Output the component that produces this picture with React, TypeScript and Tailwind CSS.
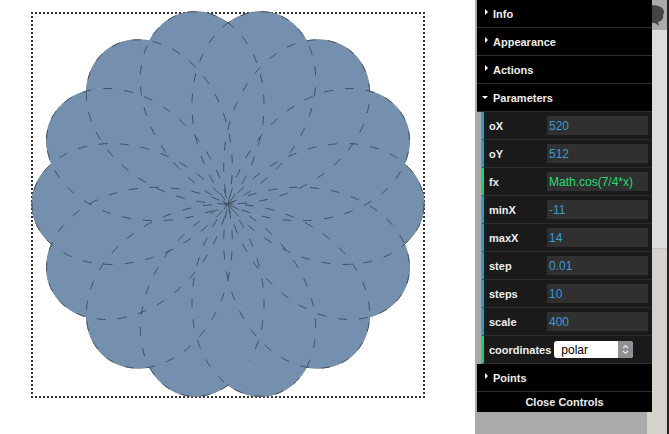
import React, { useMemo } from 'react';

const NUM_ROWS = [
  { label: 'oX', value: '520' },
  { label: 'oY', value: '512' },
  { label: 'fx', value: 'Math.cos(7/4*x)', fn: true },
  { label: 'minX', value: '-11' },
  { label: 'maxX', value: '14' },
  { label: 'step', value: '0.01' },
  { label: 'steps', value: '10' },
  { label: 'scale', value: '400' },
];

const Folder = ({ title, open }: { title: string; open?: boolean }) => (
  <div className="relative flex h-7 items-center border-b border-[#2c2c2c] bg-black pl-[16px] pt-px text-[11px] font-bold text-[#eee]">
    {title}
    <span
      className={
        open
          ? 'absolute left-[5px] top-[12px] h-0 w-0 border-x-[3px] border-t-[3px] border-x-transparent border-t-white'
          : 'absolute left-[8px] top-[9px] h-0 w-0 border-y-[3px] border-l-[3px] border-y-transparent border-l-white'
      }
    />
  </div>
);

export default function App() {
  const d = useMemo(() => {
    const pts: string[] = [];
    for (let x = -11; x <= 14.0001; x += 0.01) {
      const r = 196 * Math.cos((7 / 4) * x);
      pts.push(`${(195 + r * Math.cos(x)).toFixed(2)} ${(190 + r * Math.sin(x)).toFixed(2)}`);
    }
    return 'M' + pts.join('L');
  }, []);

  return (
    <div className="flex h-[434px] w-[669px] overflow-hidden bg-white font-['Liberation_Sans',Arial,sans-serif]">
      <div className="w-[475px] shrink-0 pl-[31px] pt-[12px]">
        <div className="h-[386px] w-[394px] border-2 border-dotted border-[#333]">
          <svg width="390" height="382" viewBox="0 0 390 382" className="block overflow-visible">
            {/* solid line under the fill: only its outer half shows, as the thin edge */}
            <path d={d} fill="none" stroke="#6a7888" strokeWidth="1" />
            <path d={d} fill="#7590ae" stroke="#434f5f" strokeWidth="1" strokeDasharray="9 12" />
          </svg>
        </div>
      </div>

      <div className="flex w-[194px] shrink-0">
        <div className="relative flex w-[192px] flex-col bg-[#d4d2cb]">
          <div className="flex h-[30px] shrink-0 items-start bg-[#aaaaaa] pl-[177px]">
            <svg width="13" height="24" viewBox="0 0 13 24" className="mt-[4px] block" fill="#444444">
              <path d="M0 1c7 0 12 3 12 7s-5 6-12 6z" />
              <path d="M0 12c5 1 9 0 11-1 1 3-1 6-5 7l1 4-4-3-3 0z" />
            </svg>
          </div>
          <div className="h-[219px] shrink-0 border-b border-[#c4c2c6] bg-[#dcdcdc]" />

          <div className="absolute left-0 top-0 h-full w-[172px] bg-[#aaaaaa]" />

          <div className="absolute left-[2px] top-0 w-[175px]">
            <Folder title="Info" />
            <Folder title="Appearance" />
            <Folder title="Actions" />
            <Folder title="Parameters" open />
            <div className="bg-[#aaaaaa] pl-[4px]">
              {NUM_ROWS.map((row) => (
                <div
                  key={row.label}
                  className={`flex h-7 items-center border-b border-l-[3px] border-b-[#2c2c2c] bg-[#1a1a1a] pl-[5px] text-[11px] font-bold text-[#eee] ${row.fn ? 'border-l-[#1ed36f]' : 'border-l-[#2f9bd0]'}`}
                >
                  <span className="w-[58px] pt-px">{row.label}</span>
                  <span
                    className={`flex h-[19px] w-[101px] items-center bg-[#303030] pl-[2px] text-[12px] font-normal ${row.fn ? 'text-[#22dc76]' : 'text-[#3a9ad6]'}`}
                  >
                    {row.value}
                  </span>
                </div>
              ))}
              <div className="flex h-7 items-center border-b border-l-[3px] border-b-[#2c2c2c] border-l-[#1ed36f] bg-[#1a1a1a] pl-[5px] text-[11px] font-bold text-[#eee]">
                <span className="pt-px">coordinates</span>
                <span className="ml-[3px] flex h-[17px] w-[79px] items-center overflow-hidden rounded-[3px] bg-white pl-[7px] text-[12px] font-normal text-black">
                  polar
                  <span className="ml-auto flex h-full w-[15px] items-center justify-center bg-[#8f8f94] text-[#eee]">
                    <svg width="7" height="11" viewBox="0 0 7 11" fill="none" stroke="currentColor" strokeWidth="1.2">
                      <path d="M1 4l2.5-2.5L6 4M1 7l2.5 2.5L6 7" />
                    </svg>
                  </span>
                </span>
              </div>
            </div>
            <Folder title="Points" />
            <div className="flex h-[20px] items-center justify-center bg-black text-[11px] font-bold text-[#eee]">Close Controls</div>
          </div>
        </div>
        <div className="w-[2px] shrink-0 bg-[#1f2321]" />
      </div>
    </div>
  );
}
